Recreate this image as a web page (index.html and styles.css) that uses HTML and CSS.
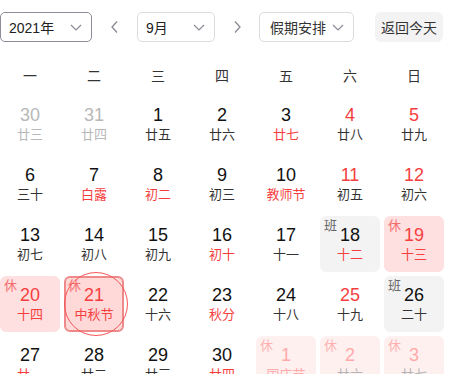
FILE: index.html
```html
<!DOCTYPE html>
<html lang="zh-CN">
<head>
    <meta charset="UTF-8">
    <meta name="viewport" content="width=device-width, initial-scale=1.0">
    <title>日历 - 假期安排</title>
    <link rel="stylesheet" href="styles.css">
</head>
<body>
    <div class="calendar">
        <div class="toolbar">
            <div class="select select-year focused">
                <span>2021年</span>
                <svg class="chevron" viewBox="0 0 16 16"><path d="M3 6l5 5 5-5"/></svg>
            </div>
            <button class="nav-arrow">
                <svg viewBox="0 0 16 16"><path d="M10 2.5l-5 5.5 5 5.5"/></svg>
            </button>
            <div class="select select-month">
                <span>9月</span>
                <svg class="chevron" viewBox="0 0 16 16"><path d="M3 6l5 5 5-5"/></svg>
            </div>
            <button class="nav-arrow">
                <svg viewBox="0 0 16 16"><path d="M6 2.5l5 5.5-5 5.5"/></svg>
            </button>
            <div class="select select-holiday">
                <span>假期安排</span>
                <svg class="chevron" viewBox="0 0 16 16"><path d="M3 6l5 5 5-5"/></svg>
            </div>
            <button class="btn-today">返回今天</button>
        </div>

        <div class="week-head">
            <div>一</div><div>二</div><div>三</div><div>四</div><div>五</div><div>六</div><div>日</div>
        </div>

        <div class="days" id="days"></div>
    </div>

    <script>
        // 日期数据: [日, 农历, 类型]
        const days = [
            ['30', '廿三', 'other'], ['31', '廿四', 'other'], ['1', '廿五'], ['2', '廿六'],
            ['3', '廿七', 'lunar-red'], ['4', '廿八', 'weekend'], ['5', '廿九', 'weekend'],
            ['6', '三十'], ['7', '白露', 'lunar-red'], ['8', '初二', 'lunar-red'], ['9', '初三'],
            ['10', '教师节', 'lunar-red'], ['11', '初五', 'weekend'], ['12', '初六', 'weekend'],
            ['13', '初七'], ['14', '初八'], ['15', '初九'], ['16', '初十', 'lunar-red'],
            ['17', '十一'], ['18', '十二', 'work lunar-red'], ['19', '十三', 'rest'],
            ['20', '十四', 'rest'], ['21', '中秋节', 'rest selected today'], ['22', '十六'],
            ['23', '秋分', 'lunar-red'], ['24', '十八'], ['25', '十九', 'weekend'], ['26', '二十', 'work'],
            ['27', '廿一', 'lunar-red'], ['28', '廿二'], ['29', '廿三'], ['30', '廿四', 'lunar-red'],
            ['1', '国庆节', 'rest next festival'], ['2', '廿六', 'rest next'], ['3', '廿七', 'rest next']
        ];

        document.getElementById('days').innerHTML = days.map(([d, lunar, type = '']) => {
            const classes = type.split(' ').filter(Boolean).map(t => 'day-' + t).join(' ');
            let tag = '';
            if (type.includes('rest')) tag = '<span class="tag">休</span>';
            if (type.includes('work')) tag = '<span class="tag">班</span>';
            const ring = type.includes('today') ? '<span class="today-ring"></span>' : '';
            return `
                <div class="day ${classes}">
                    ${tag}${ring}
                    <div class="num">${d}</div>
                    <div class="lunar">${lunar}</div>
                </div>`;
        }).join('');
    </script>
</body>
</html>
```

FILE: styles.css
```css
* {
    margin: 0;
    padding: 0;
    box-sizing: border-box;
}
body {
    font-family: 'Liberation Sans', 'Noto Sans CJK SC', sans-serif;
    background: #fff;
    color: #000;
    overflow: hidden;
}
.calendar {
    width: 444px;
}
.toolbar {
    display: flex;
    align-items: center;
    height: 30px;
    margin-top: 12px;
}
.select {
    display: flex;
    align-items: center;
    justify-content: space-between;
    height: 30px;
    border: 1px solid #dcdcdc;
    border-radius: 5px;
    padding: 0 7px 0 8px;
    font-size: 14px;
    color: #222;
}
.select.focused {
    border-color: #8e8e9a;
}
.select-year { width: 92px; }
.select-month { width: 78px; }
.select-holiday { width: 95px; padding-left: 10px; color: #333; }
.chevron {
    width: 16px;
    height: 16px;
    fill: none;
    stroke: #8a8a96;
    stroke-width: 1.2;
}
.nav-arrow {
    width: 45px;
    height: 30px;
    border: none;
    background: none;
    display: flex;
    align-items: center;
    justify-content: center;
}
.nav-arrow svg {
    width: 16px;
    height: 16px;
    fill: none;
    stroke: #8a8a96;
    stroke-width: 1.3;
}
.nav-arrow:nth-of-type(2) {
    width: 44px;
}
.btn-today {
    margin-left: 21px;
    width: 68px;
    height: 30px;
    border: none;
    border-radius: 6px;
    background: #f3f3f3;
    font-family: inherit;
    font-size: 14px;
    color: #333;
}
.week-head {
    display: grid;
    grid-template-columns: repeat(7, 1fr);
    column-gap: 4px;
    height: 30px;
    margin-top: 18px;
    align-items: center;
    text-align: center;
    font-size: 14px;
    color: #333;
}
.days {
    display: grid;
    grid-template-columns: repeat(7, 1fr);
    grid-auto-rows: 56px;
    gap: 4px;
    margin-top: 6px;
}
.day {
    position: relative;
    border-radius: 6px;
    text-align: center;
    padding-top: 8px;
}
.num {
    font-size: 18px;
    line-height: 22px;
    color: #111;
}
.lunar {
    font-size: 13px;
    line-height: 17px;
    color: #333;
}
.tag {
    position: absolute;
    left: 4px;
    top: 2px;
    font-size: 13px;
    line-height: 16px;
    color: #666;
}
.day-other .num,
.day-other .lunar { color: #b8b8b8; }
.day-weekend .num { color: #f53f3f; }
.day-lunar-red .lunar { color: #f53f3f; }
.day-work { background: #f3f3f3; }
.day-rest { background: #ffe0e0; }
.day-rest .num,
.day-rest .lunar { color: #f53f3f; }
.day-rest .tag { color: #f56c6c; }
.day-selected {
    background: #ffd8d8;
    border: 2px solid #f08a8a;
    padding-top: 6px;
}
.day-selected .tag { left: 2px; top: 0; }
.today-ring {
    position: absolute;
    left: -2px;
    top: -6px;
    width: 64px;
    height: 64px;
    border: 1px solid #f5595a;
    border-radius: 50%;
}
.day-next { background: #fff0f0; }
.day-next .num { color: #ffaaaa; }
.day-next .tag { color: #ffb0b0; }
.day-next .lunar { color: #b5b5b5; }
.day-next.day-festival .lunar { color: #ffaaaa; }
```
